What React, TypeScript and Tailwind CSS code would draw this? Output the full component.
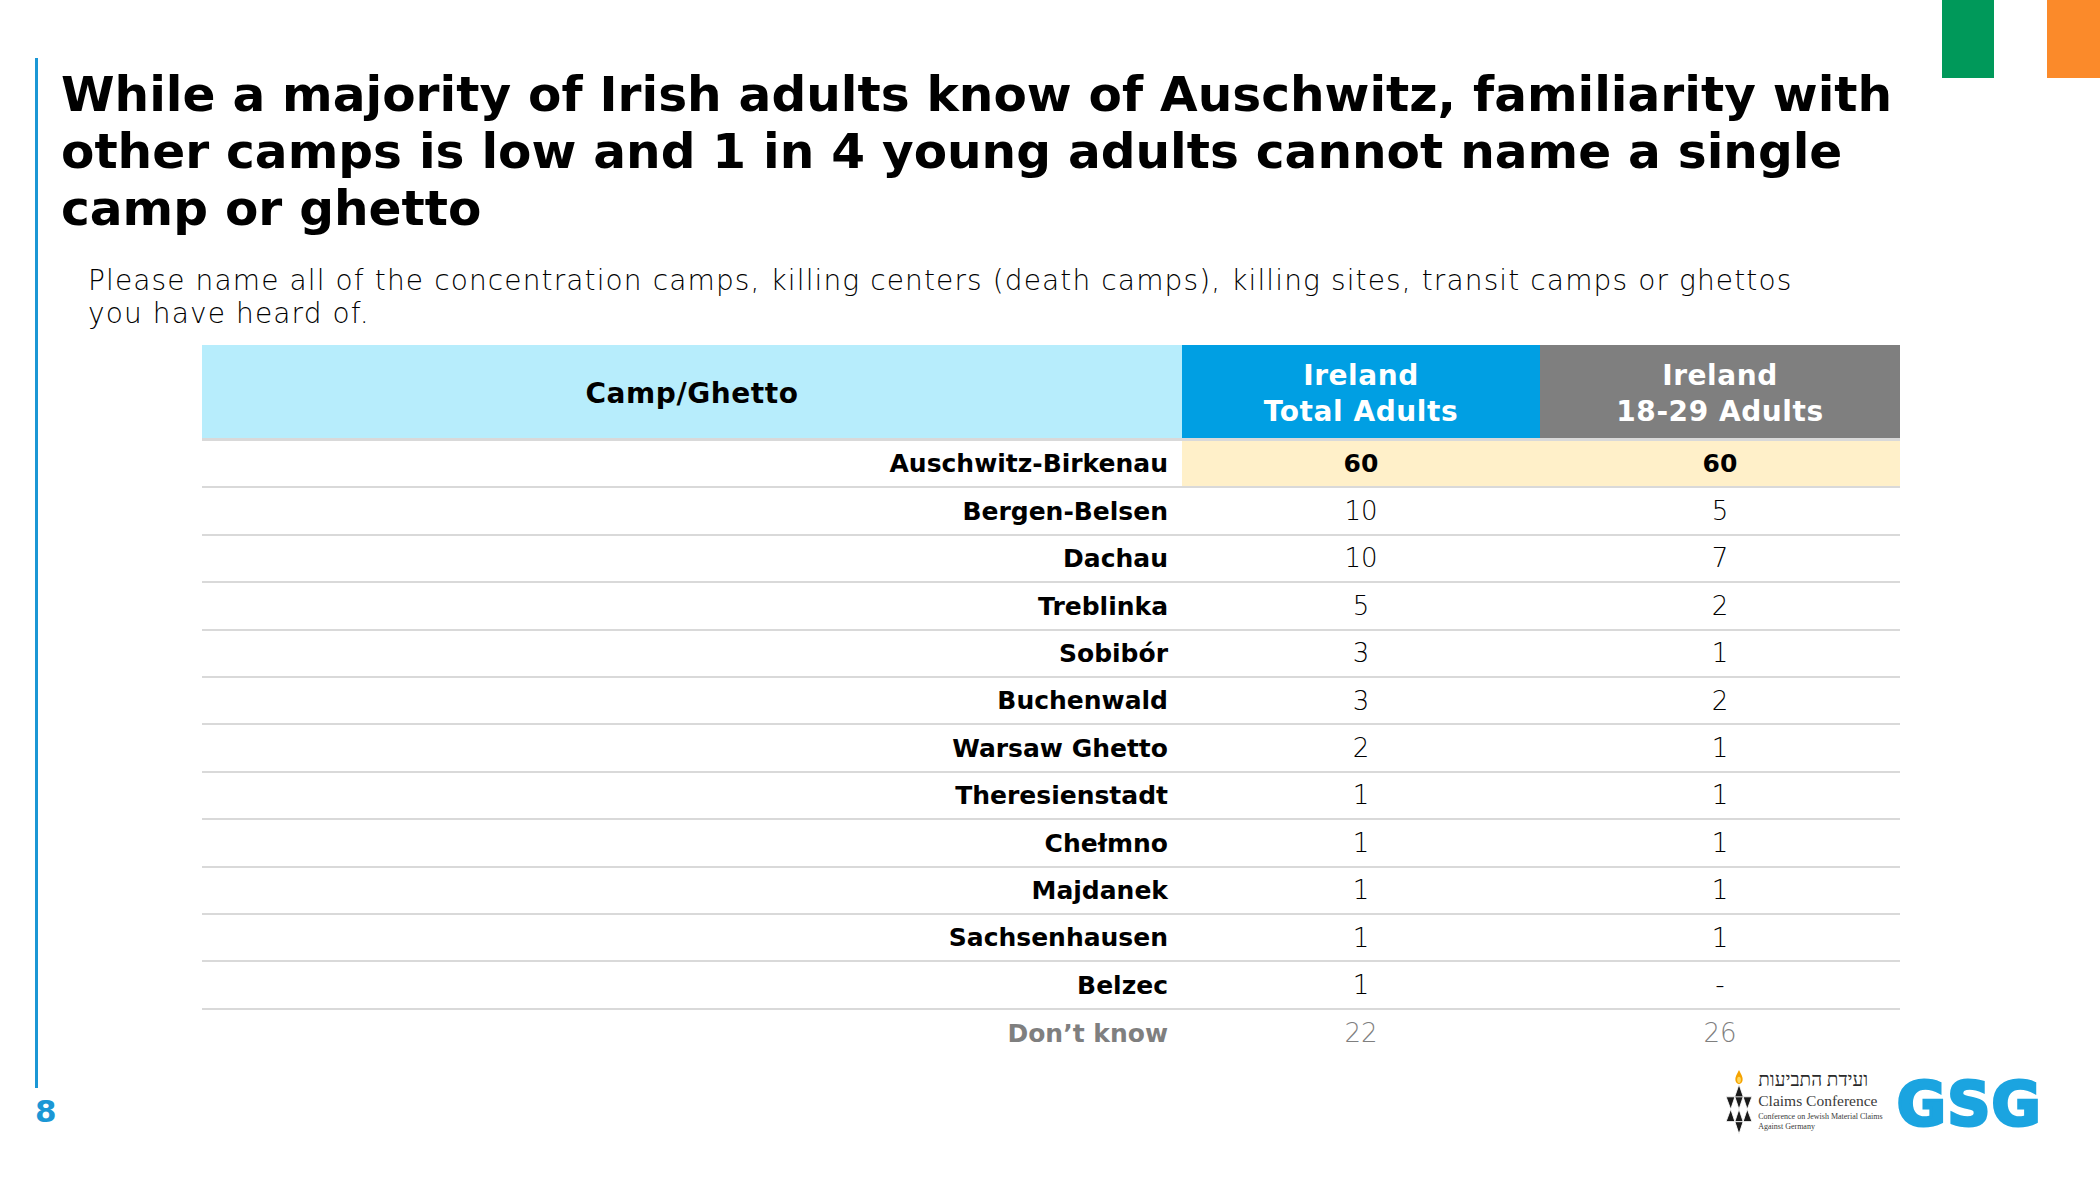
const rows = [
  { name: 'Auschwitz-Birkenau', total: '60', young: '60', hi: true },
  { name: 'Bergen-Belsen', total: '10', young: '5' },
  { name: 'Dachau', total: '10', young: '7' },
  { name: 'Treblinka', total: '5', young: '2' },
  { name: 'Sobibór', total: '3', young: '1' },
  { name: 'Buchenwald', total: '3', young: '2' },
  { name: 'Warsaw Ghetto', total: '2', young: '1' },
  { name: 'Theresienstadt', total: '1', young: '1' },
  { name: 'Chełmno', total: '1', young: '1' },
  { name: 'Majdanek', total: '1', young: '1' },
  { name: 'Sachsenhausen', total: '1', young: '1' },
  { name: 'Belzec', total: '1', young: '-' },
  { name: 'Don’t know', total: '22', young: '26', muted: true },
];

const ClaimsLogo = () => (
  <div className="flex items-start gap-[5px]">
    <svg width="28" height="64" viewBox="0 0 26 62">
      <path d="M13 0 C15 4 17 7 16.5 10 C16 12.5 14.5 13.5 13 13.5 C11.5 13.5 10 12.5 9.5 10 C9 7 11 4 13 0Z" fill="#f5a300" />
      <ellipse cx="13" cy="9.5" rx="1.8" ry="3" fill="#ffd75e" />
      <g fill="#1a1a1a" stroke="#ffffff" strokeWidth="0.8" strokeLinejoin="round">
        <polygon points="13,14 8.5,27 17.5,27" />
        <polygon points="0.5,26 9,26 5,38" />
        <polygon points="0.5,50 5,38 9,50" />
        <polygon points="13,62 9,50 17,50" />
        <polygon points="25.5,26 17,26 21,38" />
        <polygon points="25.5,50 21,38 17,50" />
        <polygon points="9,26 17,26 13,38" />
        <polygon points="9,50 17,50 13,38" />
      </g>
    </svg>
    <div className="flex flex-col pt-[1px] font-['Liberation_Serif',serif] text-[#3a3a3a]">
      <div dir="rtl" className="text-[19px] leading-[18px] text-[#2a2a2a] text-left">ועידת התביעות</div>
      <div className="mt-[3px] text-[15.5px] leading-[17px] whitespace-nowrap">Claims Conference</div>
      <div className="mt-[3px] text-[8px] leading-[10px] whitespace-nowrap">Conference on Jewish Material Claims</div>
      <div className="text-[8px] leading-[10px] whitespace-nowrap">Against Germany</div>
    </div>
  </div>
);

const App = () => {
  return (
    <div className="w-[2100px] h-[1182px] bg-white flex overflow-hidden font-['DejaVu_Sans',sans-serif] text-black">
      {/* left rail */}
      <div className="w-[61px] flex-none pl-[35px] pt-[58px] flex flex-col">
        <div className="w-[3px] h-[1030px] bg-[#1b97d5]" />
        <div className="mt-[8px] text-[31px] leading-none font-bold text-[#1b97d5]">8</div>
      </div>

      <div className="flex-1 flex flex-col">
        <div className="flex justify-between items-start">
          <h1 className="mt-[66px] text-[48.6px] leading-[57px] font-bold whitespace-nowrap">
            While a majority of Irish adults know of Auschwitz, familiarity with
            <br />
            other camps is low and 1 in 4 young adults cannot name a single
            <br />
            camp or ghetto
          </h1>
          <div className="flex">
            <div className="w-[52px] h-[78px] bg-[#00995a]" />
            <div className="w-[53px] h-[78px] bg-white" />
            <div className="w-[53px] h-[78px] bg-[#fb8a2a]" />
          </div>
        </div>

        <p className="ml-[27px] mt-[27px] text-[28px] leading-[33px] font-extralight tracking-[0.04em] whitespace-nowrap">
          Please name all of the concentration camps, killing centers (death camps), killing sites, transit camps or ghettos
          <br />
          you have heard of.
        </p>

        <div className="ml-[141px] mt-[15px] w-[1698px] flex flex-col">
          <div className="flex h-[96px] border-b-[3px] border-[#d9d9d9] text-[28px] font-bold leading-[36px] tracking-[0.02em]">
            <div className="w-[980px] bg-[#b7edfc] flex items-center justify-center pt-[4px]">Camp/Ghetto</div>
            <div className="w-[358px] bg-[#009fe3] text-white flex items-center justify-center text-center pt-[5px]">
              Ireland
              <br />
              Total Adults
            </div>
            <div className="w-[360px] bg-[#7f7f7f] text-white flex items-center justify-center text-center pt-[5px]">
              Ireland
              <br />
              18-29 Adults
            </div>
          </div>

          {rows.map((r, i) => (
            <div
              key={r.name}
              className={
                i < rows.length - 1
                  ? 'flex h-[47.4px] border-b-2 border-[#d9d9d9]'
                  : 'flex h-[47.4px]'
              }
            >
              <div
                className={
                  r.muted
                    ? 'w-[980px] flex items-center justify-end pr-[14px] pt-[1px] text-[25px] font-bold text-[#7f7f7f]'
                    : 'w-[980px] flex items-center justify-end pr-[14px] pt-[1px] text-[25px] font-bold'
                }
              >
                {r.name}
              </div>
              {[r.total, r.young].map((v, j) => (
                <div
                  key={j}
                  className={
                    r.hi
                      ? (j === 0 ? 'w-[358px]' : 'w-[360px]') + ' flex items-center justify-center pt-[1px] bg-[#fff0c9] text-[25px] font-bold'
                      : r.muted
                        ? (j === 0 ? 'w-[358px]' : 'w-[360px]') + ' flex items-center justify-center pt-[1px] text-[26px] font-extralight text-[#7f7f7f]'
                        : (j === 0 ? 'w-[358px]' : 'w-[360px]') + ' flex items-center justify-center pt-[1px] text-[26px] font-extralight'
                  }
                >
                  {v}
                </div>
              ))}
            </div>
          ))}
        </div>

        <div className="mt-[13px] mr-[58px] flex justify-end items-start gap-[14px]">
          <ClaimsLogo />
          <div className="mt-[4px] text-[60px] leading-none font-bold text-[#1ba4e0] tracking-[0.02em] [-webkit-text-stroke:3px_#1ba4e0]">
            GSG
          </div>
        </div>
      </div>
    </div>
  );
};

export default App;
